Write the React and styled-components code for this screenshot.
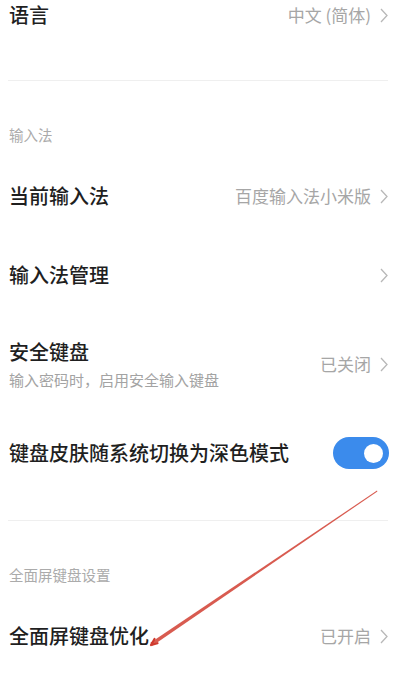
import styled, {createGlobalStyle} from "styled-components";

const GlobalStyle = createGlobalStyle`
  html, body {
    margin: 0;
    padding: 0;
    background: #fff;
  }
  body {
    font-family: "Noto Sans CJK SC", "Noto Sans", sans-serif;
  }
`;

const Page = styled.div`
  position: relative;
  width: 394px;
  height: 700px;
  overflow: hidden;
  background: #fff;
  padding: 0 6px 0 9px;
  box-sizing: border-box;
`;

const Row = styled.div`
  display: flex;
  align-items: center;
  justify-content: space-between;
  height: ${props => props.h || 80}px;
`;

const Texts = styled.div`
  display: flex;
  flex-direction: column;
`;

const Title = styled.div`
  font-size: 20px;
  line-height: 28px;
  font-weight: 500;
  color: #1f1f1f;
  white-space: nowrap;
`;

const Sub = styled.div`
  margin-top: 4px;
  font-size: 15px;
  line-height: 20px;
  color: #a3a3a3;
  white-space: nowrap;
`;

const Value = styled.div`
  display: flex;
  align-items: center;
  gap: 9px;
  font-size: 17px;
  line-height: 24px;
  color: #a6a6a6;
  white-space: nowrap;
`;

const Divider = styled.div`
  height: 1px;
  background: #efefef;
  margin-top: ${props => props.top}px;
  margin-left: -1px;
`;

const Header = styled.div`
  padding: 44px 0 11px;
  font-size: 14.5px;
  line-height: 20px;
  color: #ababab;
`;

const Toggle = styled.div`
  width: 56px;
  height: 32px;
  border-radius: 16px;
  background: #3b8bec;
  display: flex;
  align-items: center;
  justify-content: flex-end;
  padding-right: 6px;
  box-sizing: border-box;
  margin-right: -1px;
`;

const Knob = styled.div`
  width: 19px;
  height: 19px;
  border-radius: 50%;
  background: #fff;
`;

const Annotation = styled.svg`
  position: absolute;
  left: 0;
  top: 0;
  pointer-events: none;
`;

function Chevron() {
  return (
    <svg width="8" height="15" viewBox="0 0 8 15">
      <path d="M1 1 L7 7.5 L1 14" fill="none" stroke="#b8b8b8" strokeWidth="1.3" />
    </svg>
  );
}

function Item({title, sub, value, h, children}) {
  return (
    <Row h={h}>
      <Texts>
        <Title>{title}</Title>
        {sub && <Sub>{sub}</Sub>}
      </Texts>
      {children || (
        <Value>
          {value}
          <Chevron />
        </Value>
      )}
    </Row>
  );
}

export default function App() {
  return (
    <Page>
      <GlobalStyle />
      <Item title="语言" value="中文 (简体)" h={30} />
      <Divider top={50} />
      <Header>输入法</Header>
      <Item title="当前输入法" value="百度输入法小米版" h={80} />
      <Item title="输入法管理" value="" h={78} />
      <Item title="安全键盘" sub="输入密码时，启用安全输入键盘" value="已关闭" h={100} />
      <Item title="键盘皮肤随系统切换为深色模式" h={78}>
        <Toggle>
          <Knob />
        </Toggle>
      </Item>
      <Divider top={28} />
      <Header>全面屏键盘设置</Header>
      <Item title="全面屏键盘优化" value="已开启" h={80} />

      <Annotation width="394" height="700" viewBox="0 0 394 700">
        <polygon points="377,490.6 377.4,491.4 152.4,645.8 150.4,642.8" fill="#d4493d" opacity="0.9" />
        <path d="M151 645 L154.5 639 M151 645 L157.5 643.2" stroke="#cf3a2e" strokeWidth="2.2" strokeLinecap="round" fill="none" />
      </Annotation>
    </Page>
  );
}
